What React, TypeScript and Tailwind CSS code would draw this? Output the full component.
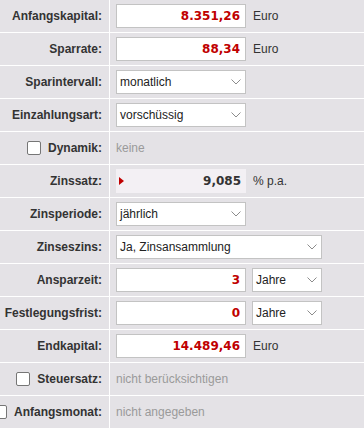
import React from "react";

const arial = "font-['Liberation_Sans',Arial,sans-serif]";
const verdana = "font-['DejaVu_Sans',Verdana,sans-serif]";

function Chevron() {
  return (
    <svg width="10" height="6" viewBox="0 0 10 6" className="shrink-0">
      <polyline points="0.5,0.5 5,5 9.5,0.5" fill="none" stroke="#8c8c8c" strokeWidth="1" />
    </svg>
  );
}

function Checkbox() {
  return <div className="w-[14px] h-[14px] shrink-0 border border-[#767676] rounded-[2px] bg-white mr-[7px]" />;
}

function Row({ label, check, children }: { label: string; check?: boolean; children?: React.ReactNode }) {
  return (
    <div className="flex h-[33px] border-b border-white">
      <div className="w-[110px] shrink-0 border-r border-white flex items-center justify-end pr-[7px] overflow-hidden">
        <div className="flex items-center justify-end shrink-0">
          {check && <Checkbox />}
          <span className={`${arial} text-[12px] font-bold text-[#333] whitespace-nowrap`}>{label}</span>
        </div>
      </div>
      <div className="flex-1 flex items-center pl-[6px]">{children}</div>
    </div>
  );
}

function NumField({ value, w = "w-[130px]" }: { value: string; w?: string }) {
  return (
    <div className={`${w} h-[24px] border border-[#c3c3c3] bg-white flex items-center justify-end pr-[5px]`}>
      <span className={`${verdana} text-[12px] font-bold text-[#c00000]`}>{value}</span>
    </div>
  );
}

function Select({ value, w = "w-[130px]" }: { value: string; w?: string }) {
  return (
    <div className={`${w} h-[24px] border border-[#c3c3c3] bg-white flex items-center justify-between pl-[3px] pr-[4px]`}>
      <span className={`${arial} text-[12px] text-[#222] whitespace-nowrap`}>{value}</span>
      <Chevron />
    </div>
  );
}

function Unit({ children }: { children: React.ReactNode }) {
  return <span className={`${arial} text-[12px] text-[#333] ml-[7px] whitespace-nowrap`}>{children}</span>;
}

function Muted({ children }: { children: React.ReactNode }) {
  return <span className={`${arial} text-[12px] text-[#9a9a9a] whitespace-nowrap`}>{children}</span>;
}

export default function App() {
  return (
    <div className="w-[364px] h-[429px] bg-[#e4e2e6] overflow-hidden">
      <Row label="Anfangskapital:">
        <NumField value="8.351,26" />
        <Unit>Euro</Unit>
      </Row>
      <Row label="Sparrate:">
        <NumField value="88,34" />
        <Unit>Euro</Unit>
      </Row>
      <Row label="Sparintervall:">
        <Select value="monatlich" />
      </Row>
      <Row label="Einzahlungsart:">
        <Select value="vorschüssig" />
      </Row>
      <Row label="Dynamik:" check>
        <Muted>keine</Muted>
      </Row>
      <Row label="Zinssatz:">
        <div className="w-[130px] h-[24px] bg-[#f3f0f4] flex items-center justify-between pl-[3px] pr-[5px]">
          <svg width="5" height="8" viewBox="0 0 5 8">
            <polygon points="0,0 5,4 0,8" fill="#c00000" />
          </svg>
          <span className={`${verdana} text-[12px] font-bold text-[#333]`}>9,085</span>
        </div>
        <Unit>% p.a.</Unit>
      </Row>
      <Row label="Zinsperiode:">
        <Select value="jährlich" />
      </Row>
      <Row label="Zinseszins:">
        <Select value="Ja, Zinsansammlung" w="w-[206px]" />
      </Row>
      <Row label="Ansparzeit:">
        <NumField value="3" />
        <div className="ml-[6px]">
          <Select value="Jahre" w="w-[70px]" />
        </div>
      </Row>
      <Row label="Festlegungsfrist:">
        <NumField value="0" />
        <div className="ml-[6px]">
          <Select value="Jahre" w="w-[70px]" />
        </div>
      </Row>
      <Row label="Endkapital:">
        <NumField value="14.489,46" />
        <Unit>Euro</Unit>
      </Row>
      <Row label="Steuersatz:" check>
        <Muted>nicht berücksichtigen</Muted>
      </Row>
      <Row label="Anfangsmonat:" check>
        <Muted>nicht angegeben</Muted>
      </Row>
    </div>
  );
}
